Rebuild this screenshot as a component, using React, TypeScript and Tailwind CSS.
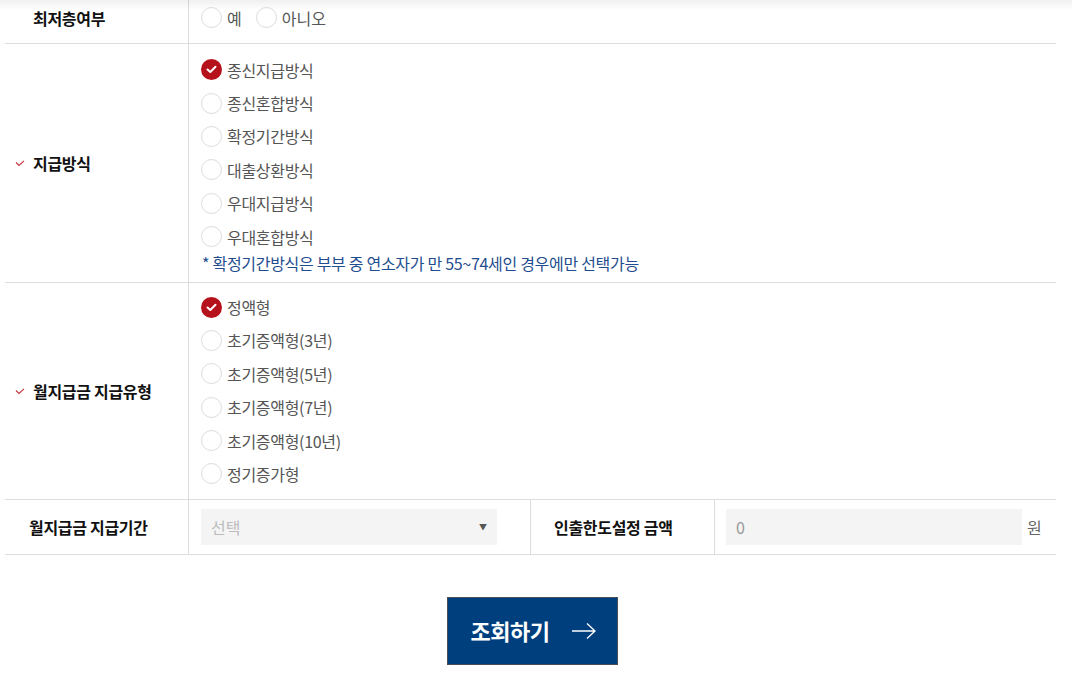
const payMethods = ['종신지급방식', '종신혼합방식', '확정기간방식', '대출상환방식', '우대지급방식', '우대혼합방식'];
const payTypes = ['정액형', '초기증액형(3년)', '초기증액형(5년)', '초기증액형(7년)', '초기증액형(10년)', '정기증가형'];

function Radio({ checked }: { checked?: boolean }) {
  if (checked) {
    return (
      <span className="flex h-[21px] w-[21px] shrink-0 items-center justify-center rounded-full bg-[#b5121b]">
        <svg width="11" height="9" viewBox="0 0 11 9" fill="none">
          <path d="M1.5 4.5 L4.3 7 L9.5 1.8" stroke="white" strokeWidth="2" strokeLinecap="round" strokeLinejoin="round" />
        </svg>
      </span>
    );
  }
  return <span className="h-[21px] w-[21px] shrink-0 rounded-full border border-[#dcdcdc] bg-white" />;
}

function RadioItem({ label, checked }: { label: string; checked?: boolean }) {
  return (
    <label className="flex h-[33.4px] items-center gap-[5px] text-[16px] tracking-[-0.3px] text-[#555]">
      <Radio checked={checked} />
      <span>{label}</span>
    </label>
  );
}

function Label({ text, required }: { text: string; required?: boolean }) {
  return (
    <div className="flex w-[184px] shrink-0 items-center border-r border-[#dddddd] pl-[10px]">
      <span className="flex w-[18px] items-center">
        {required && (
          <svg width="10" height="7" viewBox="0 0 10 7" fill="none">
            <path d="M1 2.5 L4 5.5 L9 0.8" stroke="#c8323c" strokeWidth="1.1" />
          </svg>
        )}
      </span>
      <span className="text-[16px] font-bold tracking-[-0.3px] text-[#111]">{text}</span>
    </div>
  );
}

export default function App() {
  return (
    <div className="relative h-[692px] w-[1072px] overflow-hidden bg-white font-['Noto_Sans_CJK_KR','Noto_Sans',sans-serif]">
      {/* top shadow from sticky header */}
      <div className="pointer-events-none absolute inset-x-0 top-0 z-10 h-[10px] bg-gradient-to-b from-[rgba(0,0,0,0.06)] to-transparent" />

      <div className="-mt-[8px] ml-[5px] w-[1051px]">
        {/* 최저층여부 */}
        <div className="flex h-[52px] border-b border-[#dddddd]">
          <Label text="최저층여부" />
          <div className="flex items-center gap-[14px] pl-[12px]">
            <label className="flex items-center gap-[5px] text-[16px] text-[#555]">
              <Radio />
              <span>예</span>
            </label>
            <label className="flex items-center gap-[5px] text-[16px] text-[#555]">
              <Radio />
              <span>아니오</span>
            </label>
          </div>
        </div>

        {/* 지급방식 */}
        <div className="flex border-b border-[#dddddd]">
          <Label text="지급방식" required />
          <div className="flex flex-col py-[9px] pl-[12px]">
            {payMethods.map((m, i) => (
              <RadioItem key={m} label={m} checked={i === 0} />
            ))}
            <p className="h-[20px] pl-[1px] text-[16px] leading-[20px] tracking-[-0.3px] text-[#1f4d8f]">
              * 확정기간방식은 부부 중 연소자가 만 55~74세인 경우에만 선택가능
            </p>
          </div>
        </div>

        {/* 월지급금 지급유형 */}
        <div className="flex border-b border-[#dddddd]">
          <Label text="월지급금 지급유형" required />
          <div className="flex flex-col pb-[8px] pt-[7px] pl-[12px]">
            {payTypes.map((m, i) => (
              <RadioItem key={m} label={m} checked={i === 0} />
            ))}
          </div>
        </div>

        {/* 지급기간 / 인출한도 */}
        <div className="flex h-[55px] border-b border-[#dddddd]">
          <div className="flex w-[184px] shrink-0 items-center border-r border-[#dddddd] pl-[24px]">
            <span className="text-[16px] font-bold tracking-[-0.3px] text-[#111]">월지급금 지급기간</span>
          </div>
          <div className="flex w-[342px] shrink-0 items-center border-r border-[#dddddd] pl-[12px]">
            <div className="flex h-[36px] w-[296px] items-center justify-between bg-[#f4f4f4] pl-[10px] pr-[10px]">
              <span className="text-[16px] text-[#bcbcbc]">선택</span>
              <span className="text-[8px] text-[#555]">▼</span>
            </div>
          </div>
          <div className="flex w-[184px] shrink-0 items-center border-r border-[#dddddd] pl-[23px]">
            <span className="text-[16px] font-bold tracking-[-0.3px] text-[#111]">인출한도설정 금액</span>
          </div>
          <div className="flex flex-1 items-center gap-[5px] pl-[11px]">
            <div className="flex h-[36px] w-[296px] items-center bg-[#f4f4f4] pl-[10px]">
              <span className="text-[16px] text-[#999]">0</span>
            </div>
            <span className="text-[16px] text-[#666]">원</span>
          </div>
        </div>

        <div className="flex justify-center pl-[3px] pt-[42px]">
          <button className="flex h-[68px] w-[171px] items-center justify-center gap-[22px] border border-[#4a4f57] bg-[#003f7e] pl-[4px] text-white">
            <span className="text-[22px] font-bold tracking-[-0.5px]">조회하기</span>
            <svg width="26" height="18" viewBox="0 0 26 18" fill="none">
              <path d="M1 9 H24 M16 1.5 L24 9 L16 16.5" stroke="white" strokeWidth="1.3" />
            </svg>
          </button>
        </div>
      </div>
    </div>
  );
}
